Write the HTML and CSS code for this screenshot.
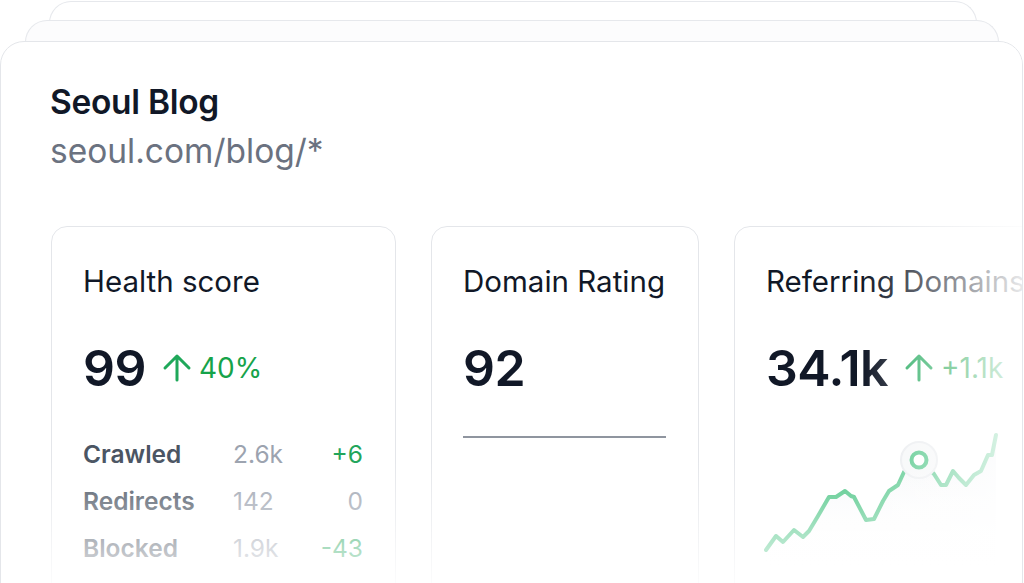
FILE: index.html
```html
<!DOCTYPE html>
<html lang="en">
<head>
  <meta charset="UTF-8" />
  <meta name="viewport" content="width=device-width, initial-scale=1" />
  <title>Seoul Blog</title>
  <link rel="stylesheet" href="styles.css">
</head>
<body>

<div class="deck">
  <div class="peek peek-far"></div>
  <div class="peek peek-near"></div>

  <div class="panel">
    <h1 class="site-name">Seoul Blog</h1>
    <div class="site-url">seoul.com/blog/*</div>

    <div class="cards">
      <div class="card card-wide">
        <div class="card-title">Health score</div>
        <div class="metric">
          <span class="metric-value">99</span>
          <span class="delta">
            <svg class="arrow" viewBox="0 0 30 30"><path d="M15 27V3M3 15L15 3L27 15" /></svg>
            40%
          </span>
        </div>
        <div class="stats">
          <span class="stat-label">Crawled</span><span class="stat-value">2.6k</span><span class="stat-delta">+6</span>
          <span class="stat-label">Redirects</span><span class="stat-value">142</span><span class="stat-delta zero">0</span>
          <span class="stat-label">Blocked</span><span class="stat-value">1.9k</span><span class="stat-delta">-43</span>
        </div>
      </div>

      <div class="card card-narrow">
        <div class="card-title">Domain Rating</div>
        <div class="metric">
          <span class="metric-value">92</span>
        </div>
        <div class="rating-bar"></div>
      </div>

      <div class="card card-wide">
        <div class="card-title">Referring Domains</div>
        <div class="metric">
          <span class="metric-value">34.1k</span>
          <span class="delta">
            <svg class="arrow" viewBox="0 0 30 30"><path d="M15 27V3M3 15L15 3L27 15" /></svg>
            +1.1k
          </span>
        </div>
        <svg class="chart" viewBox="0 0 250 150" width="250" height="150">
          <defs>
            <linearGradient id="area" x1="0" y1="0" x2="0" y2="1">
              <stop offset="0" stop-color="#eceef2" stop-opacity="0.9" />
              <stop offset="1" stop-color="#ffffff" stop-opacity="0" />
            </linearGradient>
          </defs>
          <path class="chart-area" d="M5 129L15 115L22 121L33 109L42 116L48 110L57 95L68 76L75 76L84 70L90 75L93 76L105 99L113 98L122 80L128 70L137 64L143 51L150 45L158 39L165 45L173 53L180 64L185 64L192 50L198 57L205 64L213 54L220 50L227 34L231 34L235 14L235 150L5 150Z" />
          <path class="chart-line" d="M5 129L15 115L22 121L33 109L42 116L48 110L57 95L68 76L75 76L84 70L90 75L93 76L105 99L113 98L122 80L128 70L137 64L143 51L150 45L158 39L165 45L173 53L180 64L185 64L192 50L198 57L205 64L213 54L220 50L227 34L231 34L235 14" />
          <circle class="halo" cx="158" cy="39" r="18" />
          <circle class="marker" cx="158" cy="39" r="7.5" />
        </svg>
      </div>
    </div>

    <div class="fade-right"></div>
    <div class="fade-bottom"></div>
  </div>
</div>

</body>
</html>
```

FILE: styles.css
```css
html, body {
  margin: 0; padding: 0; height: 100%;
  overflow: hidden;
  background: #fff;
  font-family: Inter, "Noto Sans", sans-serif;
  color: #111827;
}

.deck {
  padding-top: 1px;
}

.peek {
  height: 40px;
  border: 1px solid #e6e8ec;
  border-bottom: none;
  border-radius: 22px 22px 0 0;
  background: #fff;
}

.peek-far {
  margin: 0 47px 0 49px;
}

.peek-near {
  margin: -22px 25px 0 25px;
  background: #fcfcfd;
}

.panel {
  position: relative;
  margin: -20px 1px 0 0;
  height: 620px;
  border: 1px solid #e4e6ea;
  border-radius: 24px 24px 0 0;
  background: #fff;
  padding: 40px 0 0 49px;
  overflow: hidden;
}

.site-name {
  margin: 0;
  font-size: 33.5px;
  line-height: 40px;
  font-weight: 600;
  letter-spacing: -0.3px;
}

.site-url {
  margin-top: 9px;
  font-size: 33.5px;
  line-height: 40px;
  color: #6b7280;
}

.cards {
  display: flex;
  gap: 35px;
  margin: 55px 0 0 1px;
}

.card {
  flex-shrink: 0;
  box-sizing: border-box;
  height: 420px;
  border: 1px solid #e4e6ea;
  border-radius: 16px;
  padding: 37px 32px 0 31px;
}

.card-wide { width: 345px; }
.card-narrow { width: 268px; }

.card-title {
  font-size: 29.5px;
  line-height: 34px;
  white-space: nowrap;
}

.metric {
  display: flex;
  align-items: center;
  margin-top: 40px;
  height: 60px;
}

.metric-value {
  font-size: 50px;
  font-weight: 600;
  letter-spacing: -0.5px;
}

.delta {
  display: flex;
  align-items: center;
  gap: 7px;
  margin-left: 16px;
  font-size: 28px;
  color: #16a34a;
  white-space: nowrap;
}

.arrow {
  width: 30px;
  height: 30px;
  fill: none;
  stroke: #1fa85a;
  stroke-width: 3;
  stroke-linecap: round;
  stroke-linejoin: round;
}

.stats {
  display: grid;
  grid-template-columns: 150px 1fr auto;
  margin-top: 33px;
  font-size: 24.5px;
  line-height: 47px;
}

.stat-label {
  font-weight: 600;
  color: #4b5563;
}

.stat-value {
  color: #9ca3af;
}

.stat-delta {
  text-align: right;
  color: #22a55b;
}

.stat-delta.zero {
  color: #9ca3af;
}

.rating-bar {
  margin-top: 38px;
  height: 2px;
  background: #8f959f;
}

.chart {
  display: block;
  margin: 23px 0 0 -5px;
}

.chart-area {
  fill: url(#area);
}

.chart-line {
  fill: none;
  stroke: #4cc585;
  stroke-width: 4;
  stroke-linejoin: round;
  stroke-linecap: round;
}

.halo {
  fill: #f6f7f8;
  stroke: #eaecef;
  stroke-width: 2;
}

.marker {
  fill: #fff;
  stroke: #4cc585;
  stroke-width: 4;
}

.fade-right {
  position: absolute;
  top: 0; right: 0;
  width: 160px;
  height: 100%;
  background: linear-gradient(to right, rgba(255,255,255,0), rgba(255,255,255,0.9));
}

.fade-bottom {
  position: absolute;
  left: 0; right: 0;
  top: 418px;
  height: 125px;
  background: linear-gradient(to bottom, rgba(255,255,255,0), rgba(255,255,255,0.88));
}
```
